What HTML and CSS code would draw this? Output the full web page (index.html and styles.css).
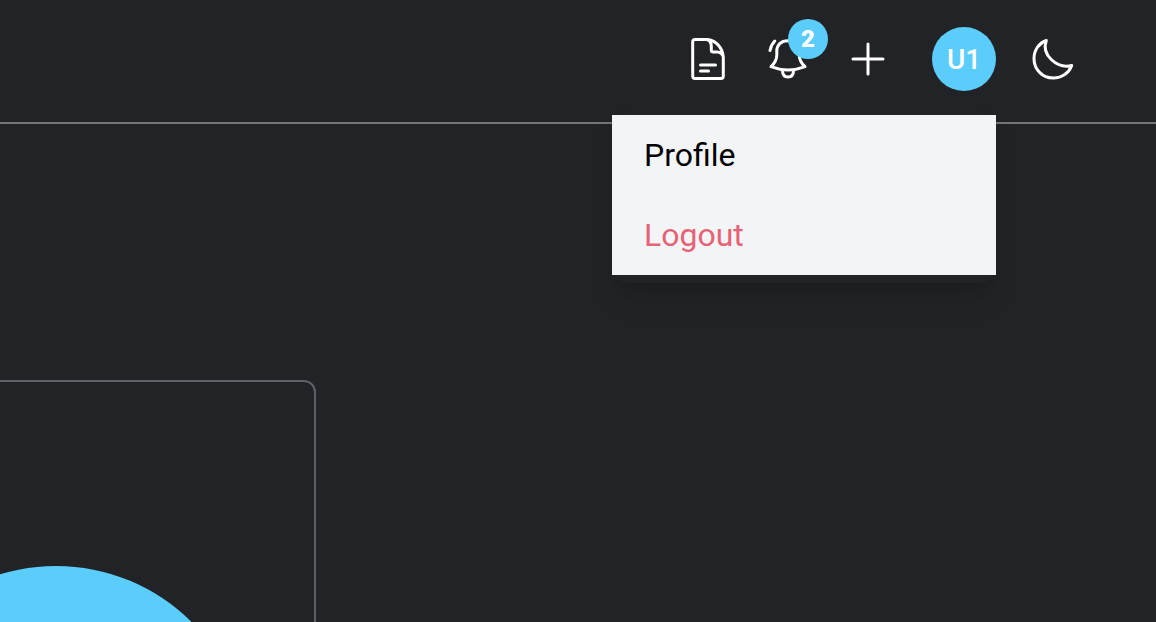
FILE: index.html
```html
<!DOCTYPE html>
<html lang="en">
<head>
    <meta charset="UTF-8">
    <meta name="viewport" content="width=device-width, initial-scale=1.0">
    <title>Dashboard</title>
    <link rel="stylesheet" href="styles.css">
</head>
<body>
    <header class="navbar">
        <button class="icon-btn" aria-label="Documents">
            <svg class="icon" viewBox="0 0 48 48">
                <path d="M23 4.500H11Q8.700 4.500 8.700 7V41Q8.700 43.500 11 43.500H37Q39.300 43.500 39.300 41V22C38.500 13 32 5 23 4.500C26 5.500 27.300 8 27.300 11V15Q27.300 17 29.300 17H33C36 17 38.500 19 39.300 22"/>
                <path d="M16.500 30H31.500M16.500 36H24.500"/>
            </svg>
        </button>

        <button class="icon-btn" aria-label="Notifications">
            <svg class="icon" viewBox="0 0 48 48">
                <path d="M7 31.700C11 28 12.800 24 12.800 20V16C12.800 10 17 5.700 24 5.700C31 5.700 35.200 10 35.200 16V20C35.200 24 37 28 41 31.700Q24 38.500 7 31.700Z"/>
                <path d="M18.500 35.500C18.500 40 21 42 24 42C27 42 29.500 40 29.500 35.500M10.800 6Q7 10 6 15.500"/>
            </svg>
            <span class="badge">2</span>
        </button>

        <button class="icon-btn" aria-label="Add">
            <svg class="icon" viewBox="0 0 48 48">
                <path d="M24 9V39M9 24H39"/>
            </svg>
        </button>

        <div class="user">
            <button class="avatar" aria-haspopup="true" aria-expanded="true">U1</button>
            <nav class="user-menu">
                <a href="#">Profile</a>
                <a href="#" class="logout">Logout</a>
            </nav>
        </div>

        <button class="icon-btn" aria-label="Dark mode">
            <svg class="icon" viewBox="0 0 48 48">
                <path d="M18.300 5.500C11 8 6 15 6 23.500C6 34.500 14.500 43 25 43C34 43 41 38 43.700 30.500C29 34 13 20 18.300 5.500Z"/>
            </svg>
        </button>
    </header>

    <main class="content">
        <section class="card">
            <div class="picture"></div>
        </section>
    </main>
</body>
</html>
```
FILE: styles.css
```css
* {
    box-sizing: border-box;
}

body {
    margin: 0;
    height: 100vh;
    overflow: hidden;
    background-color: #222326;
    color: #fff;
    font-family: Roboto, "Liberation Sans", sans-serif;
}

button {
    padding: 0;
    border: none;
    background: none;
    color: #fff;
    font-family: inherit;
    cursor: pointer;
}

.navbar {
    display: flex;
    justify-content: flex-end;
    align-items: center;
    gap: 32px;
    padding: 27px 80px 31px;
    border-bottom: 2px solid #737478;
}

.icon-btn {
    position: relative;
    width: 48px;
    height: 48px;
}

.icon {
    display: block;
    width: 48px;
    height: 48px;
    fill: none;
    stroke: #fff;
    stroke-width: 3;
    stroke-linecap: round;
    stroke-linejoin: round;
}

.badge {
    position: absolute;
    top: -16px;
    left: 24px;
    width: 40px;
    height: 40px;
    border-radius: 50%;
    background-color: #5bcdfa;
    font-size: 24px;
    font-weight: 900;
    line-height: 40px;
    text-align: center;
}

.user {
    position: relative;
    margin-left: 8px;
}

.avatar {
    display: block;
    width: 64px;
    height: 64px;
    border-radius: 50%;
    background-color: #5bcdfa;
    font-size: 28px;
    font-weight: 500;
}

.user-menu {
    position: absolute;
    top: 80px;
    right: 0;
    width: 384px;
    padding: 8px 0;
    border-radius: 16px;
    background-color: #222326;
    box-shadow: 0 20px 30px -6px rgba(0, 0, 0, 0.1), 0 8px 12px -4px rgba(0, 0, 0, 0.1);
}

.user-menu a {
    display: block;
    padding: 0 32px;
    background-color: #f3f4f6;
    color: #000;
    font-size: 32px;
    line-height: 80px;
    text-decoration: none;
}

.user-menu .logout {
    color: #e66376;
}

.card {
    width: 520px;
    height: 640px;
    margin-top: 256px;
    margin-left: -204px;
    padding-top: 184px;
    border: 2px solid #5f6068;
    border-radius: 12px;
}

.picture {
    width: 384px;
    height: 384px;
    margin: 0 auto;
    border-radius: 50%;
    background-color: #5bcdfa;
}
```
